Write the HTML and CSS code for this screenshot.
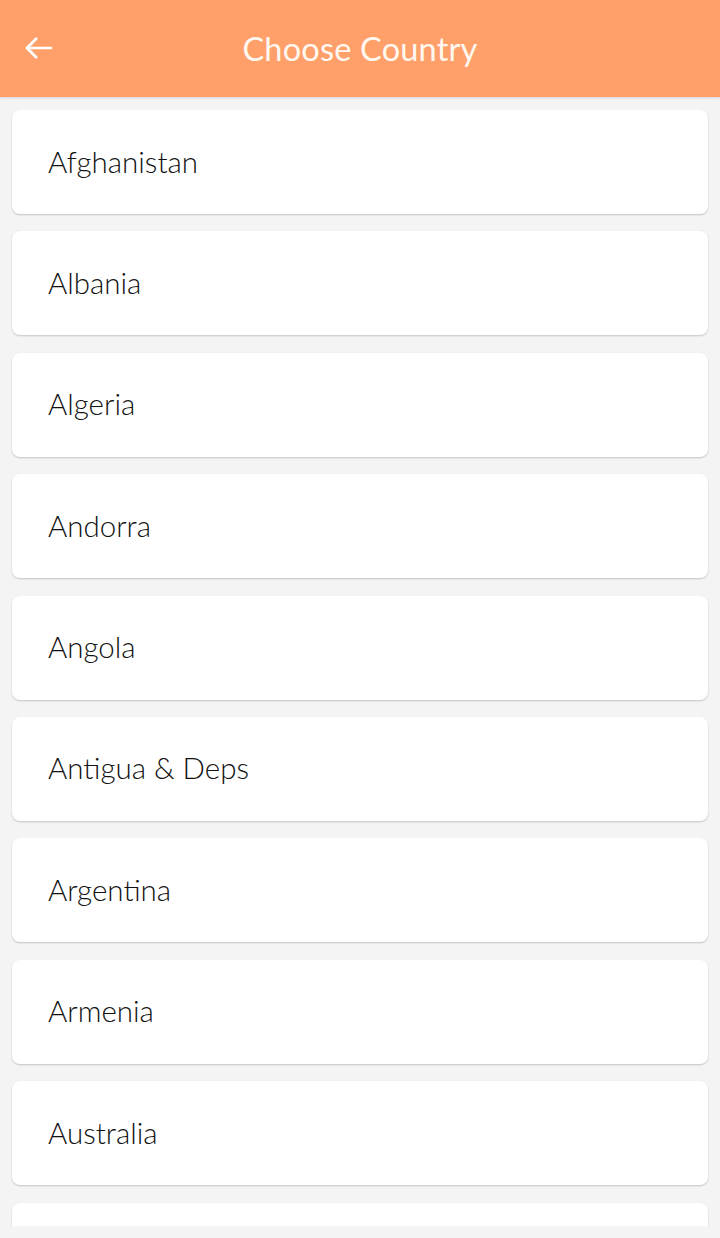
FILE: index.html
```html
<!DOCTYPE html>
<html lang="en">
<head>
  <meta charset="UTF-8" />
  <meta name="viewport" content="width=device-width, initial-scale=1.0"/>
  <title>Choose Country</title>
  <link rel="stylesheet" href="styles.css">
</head>
<body>

  <div class="app">
    <!-- Toolbar -->
    <header class="toolbar">
      <button class="back-btn" aria-label="Back">
        <svg width="34" height="34" viewBox="0 0 24 24">
          <path d="M20.5 12H3.5M10 5.5L3.5 12L10 18.5" fill="none" stroke="#fff" stroke-width="1.9" stroke-linecap="round" stroke-linejoin="round"/>
        </svg>
      </button>
      <h1>Choose Country</h1>
    </header>

    <!-- Country list -->
    <div class="country-list">
      <div class="country">Afghanistan</div>
      <div class="country">Albania</div>
      <div class="country">Algeria</div>
      <div class="country">Andorra</div>
      <div class="country">Angola</div>
      <div class="country">Antigua &amp; Deps</div>
      <div class="country">Argentina</div>
      <div class="country">Armenia</div>
      <div class="country">Australia</div>
      <div class="country">Austria</div>
    </div>
  </div>

</body>
</html>
```

FILE: styles.css
```css
body {
  margin: 0;
  padding: 0;
  background: #f4f4f4;
  font-family: 'Lato', 'Open Sans', sans-serif;
  color: #222;
}

.app {
  height: 1238px;
  display: flex;
  flex-direction: column;
}

.toolbar {
  height: 97px;
  flex-shrink: 0;
  background: #ffa06a;
  display: flex;
  align-items: center;
  justify-content: center;
  position: relative;
  box-shadow: 0 1px 3px rgba(0, 0, 0, 0.12);
  z-index: 1;
}

.toolbar h1 {
  margin: 0;
  font-size: 32.5px;
  font-weight: 400;
  color: #fff8f0;
  letter-spacing: 0.2px;
}

.back-btn {
  position: absolute;
  left: 22px;
  top: 31px;
  padding: 0;
  background: none;
  border: none;
  cursor: pointer;
  line-height: 0;
}

.country-list {
  height: 1116px;
  overflow: hidden;
  padding: 13px 12px 0;
  display: flex;
  flex-direction: column;
  gap: 17.4px;
}

.country {
  flex-shrink: 0;
  height: 104px;
  box-sizing: border-box;
  background: #fff;
  border-radius: 8px;
  box-shadow: 0 1px 2px rgba(0, 0, 0, 0.2);
  padding: 0 36px 2px;
  display: flex;
  align-items: center;
  font-size: 29.5px;
  font-weight: 300;
  color: #111;
}
```
